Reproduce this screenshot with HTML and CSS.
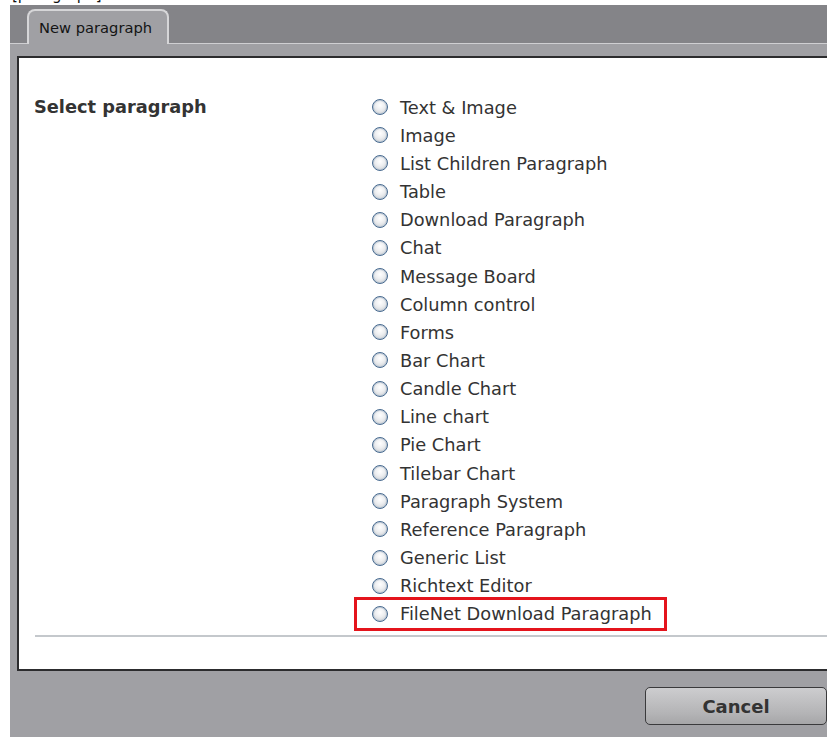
FILE: index.html
```html
<!DOCTYPE html>
<html lang="en">
<head>
<meta charset="utf-8">
<title>New paragraph</title>
<link rel="stylesheet" href="styles.css">
</head>
<body>
<div class="crumb"><span class="crumb-text">[paragraph]</span></div>
<div class="dialog">
  <div class="tabbar">
    <div class="tab">New paragraph</div>
  </div>
  <div class="strip"></div>
  <div class="panel">
    <div class="form">
      <div class="label">Select paragraph</div>
      <ul class="options">
        <li class="option"><span class="radio"></span>Text &amp; Image</li>
        <li class="option"><span class="radio"></span>Image</li>
        <li class="option"><span class="radio"></span>List Children Paragraph</li>
        <li class="option"><span class="radio"></span>Table</li>
        <li class="option"><span class="radio"></span>Download Paragraph</li>
        <li class="option"><span class="radio"></span>Chat</li>
        <li class="option"><span class="radio"></span>Message Board</li>
        <li class="option"><span class="radio"></span>Column control</li>
        <li class="option"><span class="radio"></span>Forms</li>
        <li class="option"><span class="radio"></span>Bar Chart</li>
        <li class="option"><span class="radio"></span>Candle Chart</li>
        <li class="option"><span class="radio"></span>Line chart</li>
        <li class="option"><span class="radio"></span>Pie Chart</li>
        <li class="option"><span class="radio"></span>Tilebar Chart</li>
        <li class="option"><span class="radio"></span>Paragraph System</li>
        <li class="option"><span class="radio"></span>Reference Paragraph</li>
        <li class="option"><span class="radio"></span>Generic List</li>
        <li class="option"><span class="radio"></span>Richtext Editor</li>
        <li class="option flagged"><span class="radio"></span>FileNet Download Paragraph</li>
      </ul>
    </div>
    <div class="rule"></div>
  </div>
  <div class="footer">
    <button class="btn">Cancel</button>
  </div>
</div>
</body>
</html>
```

FILE: styles.css
```css
html, body {
  margin: 0;
  padding: 0;
  background: #ffffff;
  font-family: "DejaVu Sans", "Liberation Sans", sans-serif;
  overflow: hidden;
}

/* clipped tail of the line above the dialog */
.crumb {
  height: 5px;
  overflow: hidden;
  padding-left: 12px;
}
.crumb-text {
  display: block;
  font-size: 15px;
  line-height: 15px;
  margin-top: -12px;
  color: #111;
}

.dialog {
  margin-left: 10px;
  height: 732px;
  background: #a0a0a4;
  display: flex;
  flex-direction: column;
}

.tabbar {
  height: 38px;
  background: #848488;
  border-bottom: 1px solid #cfcfd2;
  display: flex;
  align-items: flex-end;
  padding-left: 17px;
}

.tab {
  width: 128px;
  height: 33px;
  margin-bottom: -1px;
  padding-left: 10px;
  background: #a0a0a4;
  border: 2px solid #d6d6d8;
  border-bottom: none;
  border-radius: 8px 8px 0 0;
  font-size: 14.7px;
  line-height: 34px;
  color: #141414;
}

.strip {
  height: 12px;
  background: #a0a0a4;
}

.panel {
  margin-left: 7px;
  height: 611px;
  background: #ffffff;
  border-top: 2px solid #2c2c2e;
  border-left: 2px solid #2c2c2e;
  border-bottom: 2px solid #2c2c2e;
  display: flex;
  flex-direction: column;
}

.form {
  display: grid;
  grid-template-columns: 338px 1fr;
  padding: 35px 0 0 15px;
}

.label {
  font-weight: bold;
  font-size: 17.8px;
  line-height: 28px;
  color: #333;
}

.options {
  list-style: none;
  margin: 0;
  padding: 0;
  display: flex;
  flex-direction: column;
}

.option {
  height: 28.17px;
  display: flex;
  align-items: center;
  font-size: 17.8px;
  color: #333;
  white-space: nowrap;
}

/* round option button: blue ring over a pale grey dome */
.radio {
  width: 14px;
  height: 14px;
  border: 1.8px solid #46698f;
  border-radius: 50%;
  background: radial-gradient(circle at 50% 38%, #ffffff 0%, #eeeff1 40%, #c6cace 100%);
  box-shadow: inset 0 0 0 1px #bfcad6;
  margin-right: 12px;
  flex: none;
}

.flagged {
  align-self: flex-start;
  margin-left: -15px;
  padding: 0 12px 0 15px;
  outline: 3px solid #e4141c;
}

.rule {
  margin: 7px 0 0 16px;
  height: 2px;
  background: #c4c8cc;
}

.footer {
  display: flex;
  justify-content: flex-end;
  padding: 16px 0 0 0;
}

.btn {
  width: 182px;
  height: 38px;
  border: 1.5px solid #3a3a3c;
  border-radius: 5px;
  background: linear-gradient(#cdcdcf, #b4b4b6 70%, #a6a6a8);
  font-family: "DejaVu Sans", "Liberation Sans", sans-serif;
  font-weight: bold;
  font-size: 18px;
  color: #333;
  padding: 0;
}
```
